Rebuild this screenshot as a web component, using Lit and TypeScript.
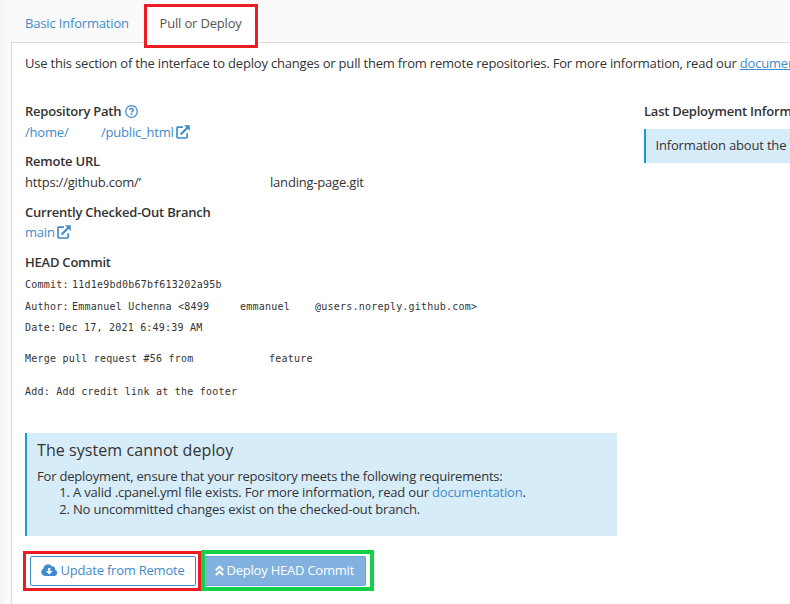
import { LitElement, html, css, svg } from "lit";
import { customElement } from "lit/decorators.js";
import { styleMap } from "lit/directives/style-map.js";

type Segment = [text: string, width: number];

const externalIcon = html`<svg class="external" viewBox="0 0 14 14">${svg`
  <path d="M7 2.2H1.9Q1 2.2 1 3.1V12.1Q1 13 1.9 13H10.3Q11.2 13 11.2 12.1V8.2" fill="none" stroke="currentColor" stroke-width="1.7"/>
  <path d="M4.6 9.6L11.4 2.8" stroke="currentColor" stroke-width="2.1"/>
  <path d="M8 .3H13.8V6.1Z" fill="currentColor"/>`}</svg>`;

const segments = (parts: Segment[]) =>
  parts.map(([text, width]) => html`<span class="seg" style=${styleMap({ width: `${width}px` })}>${text}</span>`);

@customElement("app-root")
export class AppRoot extends LitElement {
  static styles = css`
    :host { display: block; height: 604px; overflow: hidden; box-sizing: border-box; padding-left: 11px;
      background: linear-gradient(90deg, #f3f3f3 0, #fafafa 6px);
      font: 13px/20px "Open Sans", sans-serif; letter-spacing: -0.2px; color: #333; white-space: nowrap; }
    .tabs { display: flex; height: 42px; box-sizing: border-box; padding: 13px 0 0 14px; }
    .tab { color: #428bca; width: 104px; flex: none; letter-spacing: -0.17px; }
    .tab.active { position: relative; z-index: 1; margin: -9px 0 0 15px; box-sizing: border-box; width: 114px; height: 44px;
      flex: none; padding: 6px 0 0 12.5px; border: 3px solid #ed1c24; background: #fff; color: #555; }
    .panel { height: 562px; box-sizing: border-box; border: solid #ddd; border-width: 1px 0 0 1px; background: #fff; padding: 10px 0 0 13px; }
    a { color: #428bca; text-decoration: none; }
    .intro { margin-bottom: 28px; letter-spacing: -0.195px; }
    .intro a { text-decoration: underline; }
    .columns { display: grid; grid-template-columns: 592px 300px; column-gap: 27px; }
    .label { font-weight: 600; display: flex; align-items: center; letter-spacing: -0.23px; }
    .value { display: flex; align-items: center; color: #428bca; }
    .value.path { margin: 1px 0 9px; }
    .value.url { color: #333; margin: 1px 0 10px; }
    .value.branch { margin-bottom: 10px; }
    .seg { display: inline-block; flex: none; white-space: pre; overflow: hidden; }
    .help { width: 13px; height: 13px; margin-left: 4px; color: #428bca; }
    .external { width: 14px; height: 14px; }
    .commit { font: 10px/20px "DejaVu Sans Mono", monospace; letter-spacing: 0.22px; padding-top: 3px; }
    .line { display: flex; height: 20px; }
    .author { margin: 2px 0 1px; }
    .merge { margin: 11px 0 13px; }
    .notice { border-left: 2px solid #179bd7; background: #d7ecf9; box-sizing: border-box; }
    .deploy-notice { margin-top: 31px; height: 103px; padding: 6px 10px; line-height: 16px; }
    h4 { margin: 0 0 7px; font-size: 16px; font-weight: 400; line-height: 22px; letter-spacing: 0.07px; }
    ol { margin: 0; padding: 0 0 0 36px; line-height: 16.5px; letter-spacing: -0.19px; }
    .info { height: 34px; margin-top: 8px; padding: 6px 9.5px; letter-spacing: -0.17px; }
    .actions { display: flex; margin: 14px 0 0 -2px; }
    .mark { box-sizing: border-box; height: 41px; display: flex; }
    .mark.red { width: 178px; height: 40px; margin-top: 1px; border: 3px solid #ed1c24; padding: 2px 0 0 4px; }
    .mark.green { width: 173px; border: 4px solid #12d146; padding-top: 2px; }
    button { box-sizing: border-box; height: 30px; display: flex; align-items: center; padding: 0 0 2px; font: inherit; letter-spacing: -0.22px;
      border: 1px solid #428bca; border-radius: 2px; background: #fff; color: #428bca; }
    .update { width: 166px; padding-left: 10px; }
    .deploy { width: 161px; padding-left: 10px; background: #81b1de; border-color: #6ba3da; border-left: 0; color: #fff; border-radius: 0 2px 2px 0; }
    .cloud { width: 17px; height: 14px; margin-right: 2.5px; flex: none; }
    .chevrons { width: 9px; height: 11px; margin-right: 2.5px; flex: none; }
  `;

  render() {
    return html`
      <nav class="tabs">
        <a class="tab">Basic Information</a>
        <a class="tab active">Pull or Deploy</a>
      </nav>
      <main class="panel">
        <div class="intro">Use this section of the interface to deploy changes or pull them from remote repositories. For more information, read our <a>documentation</a>.</div>
        <div class="columns">
          <section>
            <div class="label">Repository Path
              <svg class="help" viewBox="0 0 13 13"><circle cx="6.5" cy="6.5" r="5.8" fill="none" stroke="currentColor" stroke-width="1.3"/><path d="M4.6 5Q4.8 3.5 6.5 3.5T8.4 5C8.4 6.2 6.5 6.1 6.5 7.6" fill="none" stroke="currentColor" stroke-width="1.5"/><rect x="5.7" y="8.4" width="1.6" height="1.5" fill="currentColor"/></svg>
            </div>
            <div class="value path">${segments([["/home/", 76], ["/public_html", 75]])}${externalIcon}</div>
            <div class="label">Remote URL</div>
            <div class="value url">${segments([["https://github.com/’", 245], ["landing-page.git", 120]])}</div>
            <div class="label">Currently Checked-Out Branch</div>
            <div class="value branch">${segments([["main", 32]])}${externalIcon}</div>
            <div class="label">HEAD Commit</div>
            <div class="commit">
              <div class="line">${segments([["Commit:", 47], ["11d1e9bd0b67bf613202a95b", 170]])}</div>
              <div class="line author">${segments([["Author:", 47], ["Emmanuel Uchenna <8499", 168], ["emmanuel", 75], ["@users.noreply.github.com>", 170]])}</div>
              <div class="line">${segments([["Date:", 34], ["Dec 17, 2021 6:49:39 AM", 170]])}</div>
              <div class="line merge">${segments([["Merge pull request #56 from", 244], ["feature", 60]])}</div>
              <div class="line">Add: Add credit link at the footer</div>
            </div>
            <div class="notice deploy-notice">
              <h4>The system cannot deploy</h4>
              <div>For deployment, ensure that your repository meets the following requirements:</div>
              <ol>
                <li>A valid .cpanel.yml file exists. For more information, read our <a>documentation</a>.</li>
                <li>No uncommitted changes exist on the checked-out branch.</li>
              </ol>
            </div>
            <div class="actions">
              <div class="mark red"><button class="update">
                <svg class="cloud" viewBox="0 0 17 14"><path d="M4 13A4 4 0 0 1 2.4 5.5A4.7 4.7 0 0 1 11 3.4A2.8 2.8 0 0 1 14.1 6.8A3.2 3.2 0 0 1 13.3 13Z" fill="currentColor"/><path d="M7.2 5H9.4V8H11.7L8.3 11.6L4.9 8H7.2Z" fill="#fff"/></svg>Update from Remote</button></div>
              <div class="mark green"><button class="deploy">
                <svg class="chevrons" viewBox="0 0 9 11"><path d="M.8 5.2L4.5 1.6L8.2 5.2M.8 10L4.5 6.4L8.2 10" fill="none" stroke="currentColor" stroke-width="2.1"/></svg>Deploy HEAD Commit</button></div>
            </div>
          </section>
          <aside>
            <div class="label">Last Deployment Information</div>
            <div class="notice info">Information about the last deployment</div>
          </aside>
        </div>
      </main>`;
  }
}
